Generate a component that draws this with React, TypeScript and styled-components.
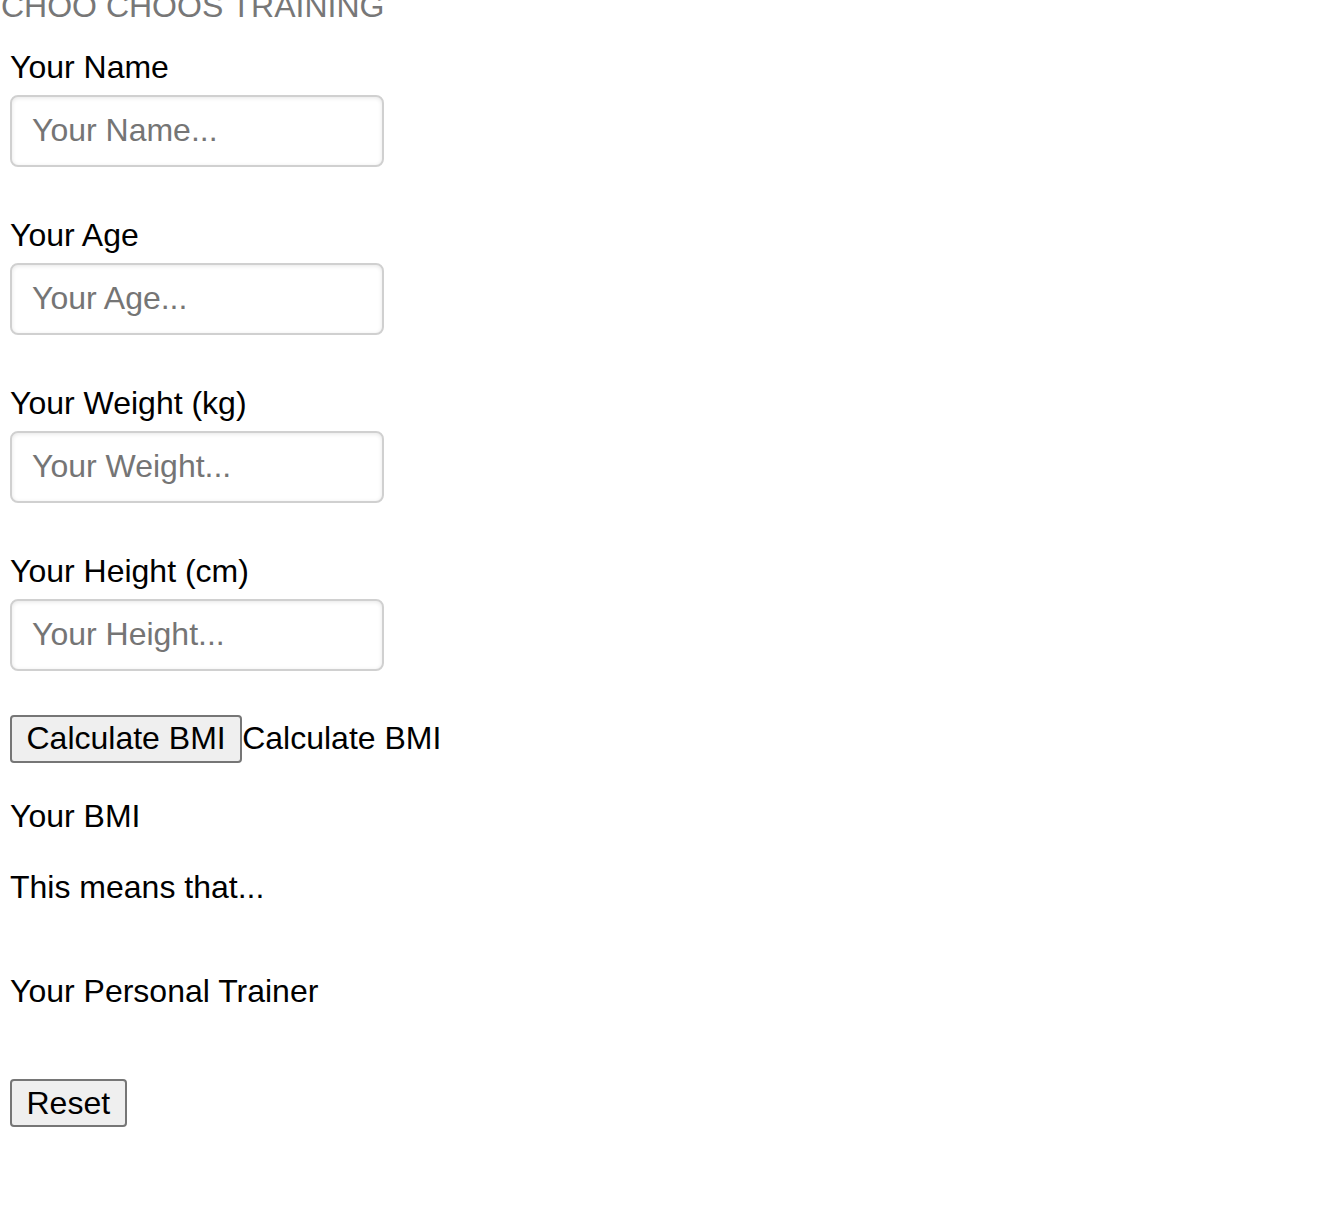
import React from "react";
import styled, { createGlobalStyle } from "styled-components";

const GlobalStyle = createGlobalStyle`
  html, body {
    margin: 0;
    padding: 0;
    background: #ffffff;
  }
  body {
    font-family: "Liberation Sans", Arial, Helvetica, sans-serif;
    font-size: 32px;
    color: #000000;
    overflow: hidden;
  }
`;

const Page = styled.div`
  display: flex;
  flex-direction: column;
  min-height: 1220px;
`;

const Header = styled.h1`
  margin: -12px 0 0 0;
  padding: 0 0 0 1px;
  font-size: 32px;
  font-weight: 400;
  line-height: 37px;
  color: #777777;
  letter-spacing: 0;
`;

const Form = styled.form`
  display: flex;
  flex-direction: column;
  align-items: flex-start;
  padding: 0 10px;
  margin-top: 23.5px;
`;

const Field = styled.div`
  display: flex;
  flex-direction: column;
  align-items: flex-start;
  margin-bottom: 50px;
`;

const Label = styled.label`
  display: block;
  font-size: 32px;
  line-height: 37px;
`;

const Input = styled.input`
  box-sizing: border-box;
  margin-top: 9px;
  width: 374px;
  height: 72px;
  padding: 0 20px;
  font-family: "Liberation Sans", Arial, Helvetica, sans-serif;
  font-size: 32px;
  color: #000;
  background: #ffffff;
  border: 2px solid #d0d0d0;
  border-radius: 8px;
  box-shadow: inset 0 1px 4px rgba(0, 0, 0, 0.1);
  outline: none;

  &::placeholder {
    color: #757575;
  }
`;

const ActionRow = styled.div<{ $top: number }>`
  display: flex;
  align-items: baseline;
  margin-top: ${(p) => p.$top}px;
`;

const Button = styled.button`
  box-sizing: border-box;
  height: 48px;
  padding: 0 14.5px;
  font-family: "Liberation Sans", Arial, Helvetica, sans-serif;
  font-size: 32px;
  line-height: 37px;
  color: #000;
  background: #efefef;
  border: 2px solid #767676;
  border-radius: 4px;
  cursor: pointer;
`;

const InlineText = styled.span`
  font-size: 32px;
  line-height: 37px;
`;

const Text = styled.p<{ $top: number }>`
  margin: ${(p) => p.$top}px 0 0 0;
  font-size: 32px;
  line-height: 37px;
`;

const fields = [
  { id: "name", label: "Your Name", placeholder: "Your Name..." },
  { id: "age", label: "Your Age", placeholder: "Your Age..." },
  { id: "weight", label: "Your Weight (kg)", placeholder: "Your Weight..." },
  { id: "height", label: "Your Height (cm)", placeholder: "Your Height..." },
];

export default function App() {
  return (
    <Page>
      <GlobalStyle />
      <Header>CHOO CHOOS TRAINING</Header>
      <Form onSubmit={(e) => e.preventDefault()}>
        {fields.map((f) => (
          <Field key={f.id}>
            <Label htmlFor={f.id}>{f.label}</Label>
            <Input id={f.id} type="text" placeholder={f.placeholder} />
          </Field>
        ))}
        <ActionRow $top={-6}>
          <Button type="button">Calculate BMI</Button>
          <InlineText>Calculate BMI</InlineText>
        </ActionRow>
        <Text $top={35}>Your BMI</Text>
        <Text $top={34}>This means that...</Text>
        <Text $top={67}>Your Personal Trainer</Text>
        <ActionRow $top={69.5}>
          <Button type="reset">Reset</Button>
        </ActionRow>
      </Form>
    </Page>
  );
}
